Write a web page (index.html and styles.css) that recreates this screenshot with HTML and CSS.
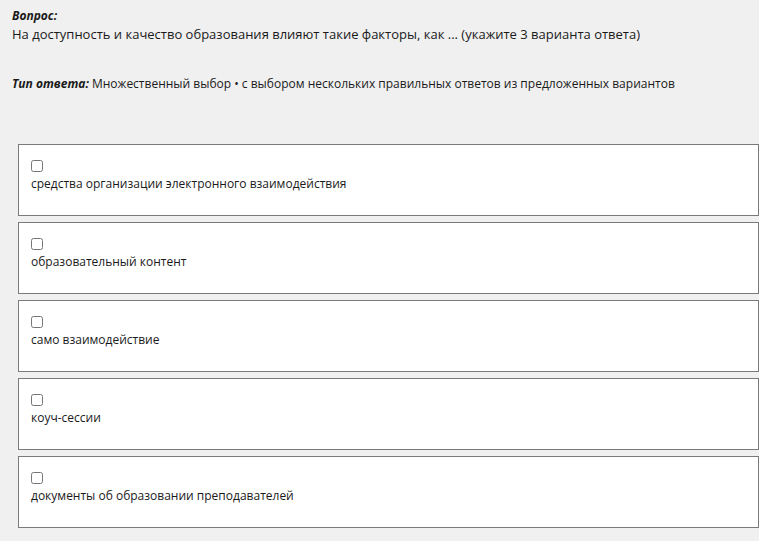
FILE: index.html
```html
<!DOCTYPE html>
<html lang="ru">

<head>
    <meta charset="UTF-8">
    <meta name="viewport" content="width=device-width, initial-scale=1.0">
    <title>Вопрос</title>
    <link rel="stylesheet" href="styles.css">
</head>

<body>
    <!-- Question text -->
    <div class="question">
        <div class="label">Вопрос:</div>
        <div class="text">На доступность и качество образования влияют такие факторы, как ... (укажите 3 варианта ответа)</div>
    </div>

    <!-- Answer type -->
    <div class="answer-type">
        <span class="label">Тип ответа:</span> Множественный выбор • с выбором нескольких правильных ответов из предложенных вариантов
    </div>

    <!-- Answer options -->
    <div class="options">
        <label class="option">
            <input type="checkbox">
            <span>средства организации электронного взаимодействия</span>
        </label>
        <label class="option">
            <input type="checkbox">
            <span>образовательный контент</span>
        </label>
        <label class="option">
            <input type="checkbox">
            <span>само взаимодействие</span>
        </label>
        <label class="option">
            <input type="checkbox">
            <span>коуч-сессии</span>
        </label>
        <label class="option">
            <input type="checkbox">
            <span>документы об образовании преподавателей</span>
        </label>
    </div>
</body>

</html>
```

FILE: styles.css
```css
/* Page basics */
body {
    margin: 0;
    padding: 7px 0 0 12px;
    background-color: #f0f0f0;
    font-family: "Open Sans", "Noto Sans", sans-serif;
    font-size: 13px;
    line-height: 17px;
    color: #1a1a1a;
}

.label {
    font-weight: bold;
    font-style: italic;
    font-size: 12px;
}

.question .text {
    margin-top: 2px;
}

.answer-type {
    margin-top: 32px;
    font-size: 12px;
}

.options {
    margin: 52px 0 0 6px;
    display: flex;
    flex-direction: column;
    gap: 6px;
    font-size: 12px;
}

.option {
    display: flex;
    flex-direction: column;
    align-items: flex-start;
    gap: 3px;
    height: 40px;
    padding: 15px 12px 15px 12px;
    background-color: #fff;
    border: 1px solid #7a7a7a;
}

.option input {
    margin: 0;
    width: 12px;
    height: 12px;
}
```
